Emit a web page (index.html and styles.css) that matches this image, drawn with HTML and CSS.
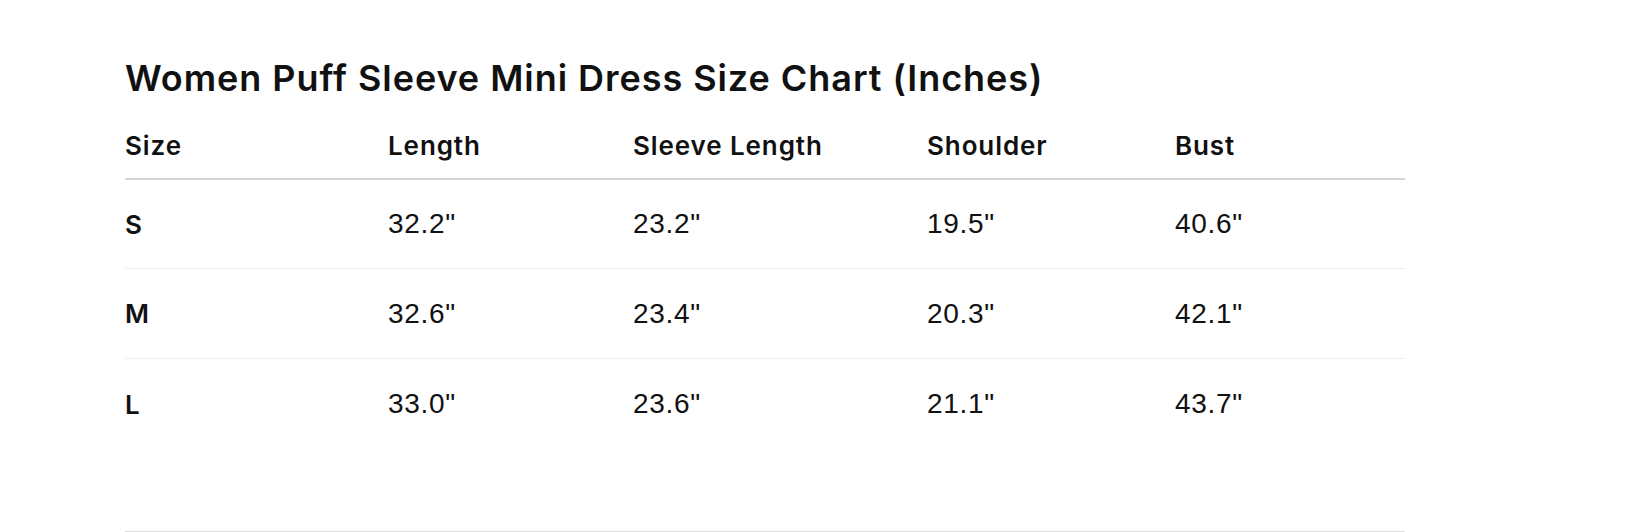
FILE: index.html
```html
<!DOCTYPE html>
<html lang="en">
<head>
<meta charset="utf-8">
<title>Size Chart</title>
<link rel="stylesheet" href="styles.css">
</head>
<body>
<main class="page">
  <h1 class="title">Women Puff Sleeve Mini Dress Size Chart (Inches)</h1>
  <div class="chart">
    <div class="row head">
      <div class="cell">Size</div>
      <div class="cell">Length</div>
      <div class="cell">Sleeve Length</div>
      <div class="cell">Shoulder</div>
      <div class="cell">Bust</div>
    </div>
    <div class="row first">
      <div class="cell size">S</div>
      <div class="cell">32.2"</div>
      <div class="cell">23.2"</div>
      <div class="cell">19.5"</div>
      <div class="cell">40.6"</div>
    </div>
    <div class="row">
      <div class="cell size">M</div>
      <div class="cell">32.6"</div>
      <div class="cell">23.4"</div>
      <div class="cell">20.3"</div>
      <div class="cell">42.1"</div>
    </div>
    <div class="row last">
      <div class="cell size">L</div>
      <div class="cell">33.0"</div>
      <div class="cell">23.6"</div>
      <div class="cell">21.1"</div>
      <div class="cell">43.7"</div>
    </div>
  </div>
  <div class="footer-rule"></div>
</main>
</body>
</html>
```
FILE: styles.css
```css
html, body {
  margin: 0;
  padding: 0;
  background: #ffffff;
}
body {
  width: 1626px;
  height: 532px;
  overflow: hidden;
  color: #111111;
  font-family: Inter, "Liberation Sans", Arial, sans-serif;
}
.page {
  padding: 54px 0 0 125px;
  width: 1280px;
}
.title {
  margin: 0;
  font-size: 36px;
  font-weight: 600;
  line-height: 48px;
  letter-spacing: 0.95px;
  color: #111111;
}
.chart {
  margin-top: 16px;
  width: 1280px;
}
.row {
  display: grid;
  grid-template-columns: 263px 245px 294px 248px 230px;
  height: 89px;
  align-items: center;
  border-bottom: 1px solid #efefef;
}
.row.head {
  height: 55px;
  border-bottom: 2px solid #d6d6d6;
  padding-bottom: 5px;
}
.row.first {
  height: 88px;
}
.row.last {
  height: 90px;
  border-bottom: none;
}
.head .cell {
  font-family: Inter, "Liberation Sans", Arial, sans-serif;
  font-weight: 600;
  font-size: 26px;
  letter-spacing: 0.9px;
}
.cell {
  font-family: "Liberation Sans", Arial, sans-serif;
  font-size: 28px;
  font-weight: 400;
  letter-spacing: 0.7px;
  color: #111111;
}
.cell.size {
  font-family: Inter, "Liberation Sans", Arial, sans-serif;
  font-weight: 600;
  font-size: 26px;
  letter-spacing: 0;
}
.footer-rule {
  margin-top: 82px;
  width: 1280px;
  border-top: 2px solid #dddddd;
}
```
